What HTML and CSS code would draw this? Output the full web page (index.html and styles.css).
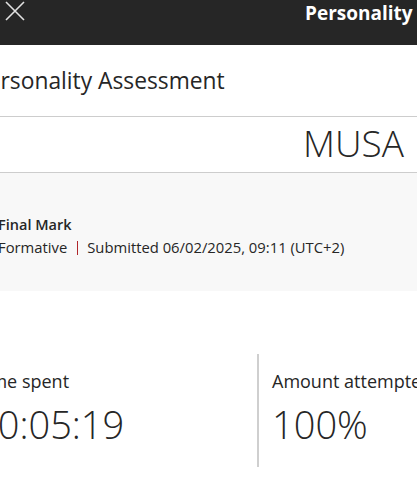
FILE: index.html
```html
<!DOCTYPE html>
<html lang="en">
<head>
<meta charset="utf-8">
<title>Personality Assessment</title>
<link rel="stylesheet" href="styles.css">
</head>
<body>
<header class="topbar">
  <button class="close" aria-label="Close">
    <svg width="22" height="22" viewBox="0 0 22 22"><path d="M2 2 L20 20 M20 2 L2 20" stroke="#e2e2e2" stroke-width="1.6" fill="none"/></svg>
  </button>
  <div class="topbar-title">Personality Assessment</div>
</header>
<main class="page">
  <section class="title-row">
    <h1 class="title">Personality Assessment</h1>
  </section>
  <section class="name-row">
    <div class="name">MUSA</div>
  </section>
  <section class="summary">
    <div class="summary-head">Final Mark</div>
    <div class="summary-meta"><span>Formative</span><span class="sep"></span><span>Submitted 06/02/2025, 09:11 (UTC+2)</span></div>
  </section>
  <section class="stats">
    <div class="stat">
      <div class="stat-label">Time spent</div>
      <div class="stat-value">00:05:19</div>
    </div>
    <div class="stat stat-divided">
      <div class="stat-label">Amount attempted</div>
      <div class="stat-value">100%</div>
    </div>
  </section>
</main>
</body>
</html>
```

FILE: styles.css
```css
html, body {
  margin: 0;
  padding: 0;
}
body {
  font-family: "Open Sans", "Noto Sans", sans-serif;
  color: #262626;
  background: #fff;
  overflow: hidden;
  width: 417px;
  height: 489px;
}
.topbar {
  height: 45px;
  background: #262626;
  display: flex;
  align-items: flex-start;
  white-space: nowrap;
}
.close {
  border: 0;
  background: none;
  padding: 0;
  margin: 0 0 0 4px;
  width: 22px;
  height: 22px;
  display: block;
}
.close svg { display: block; }
.topbar-title {
  margin-left: 279px;
  color: #fff;
  font-weight: 700;
  font-size: 19px;
  line-height: 24px;
  padding-top: 1px;
}
.page {
  display: flex;
  flex-direction: column;
}
.title-row {
  box-sizing: border-box;
  height: 72px;
  border-bottom: 1px solid #cdcdcd;
  padding: 21px 0 0 0;
  margin-left: -26px;
  white-space: nowrap;
}
.title {
  margin: 0;
  font-size: 22.8px;
  line-height: 30px;
  font-weight: 500;
}
.name-row {
  box-sizing: border-box;
  height: 56px;
  border-bottom: 1px solid #cdcdcd;
  padding: 1px 13px 0 0;
  text-align: right;
}
.name {
  font-size: 37px;
  line-height: 49px;
  font-weight: 300;
}
.summary {
  box-sizing: border-box;
  height: 118px;
  background: #f8f8f8;
  padding: 40px 0 0 0;
  margin-left: -2px;
  font-size: 14.8px;
  line-height: 23px;
  white-space: nowrap;
}
.summary-head {
  font-size: 14.5px;
  font-weight: 600;
}
.summary-meta {
  display: flex;
  align-items: center;
}
.sep {
  display: block;
  width: 1px;
  height: 14px;
  background: #b0262b;
  margin: 0 9px 0 10px;
}
.stats {
  display: grid;
  grid-template-columns: 281px 1fr;
  margin: 63px 0 0 -24px;
  white-space: nowrap;
}
.stat {
  box-sizing: border-box;
  height: 113px;
  padding-top: 15px;
}
.stat-divided {
  border-left: 2px solid #cfcfcf;
  padding-left: 13px;
}
.stat-label {
  font-size: 18px;
  line-height: 24px;
}
.stat-value {
  margin-top: 6px;
  font-size: 38px;
  line-height: 50px;
  font-weight: 300;
}
```
